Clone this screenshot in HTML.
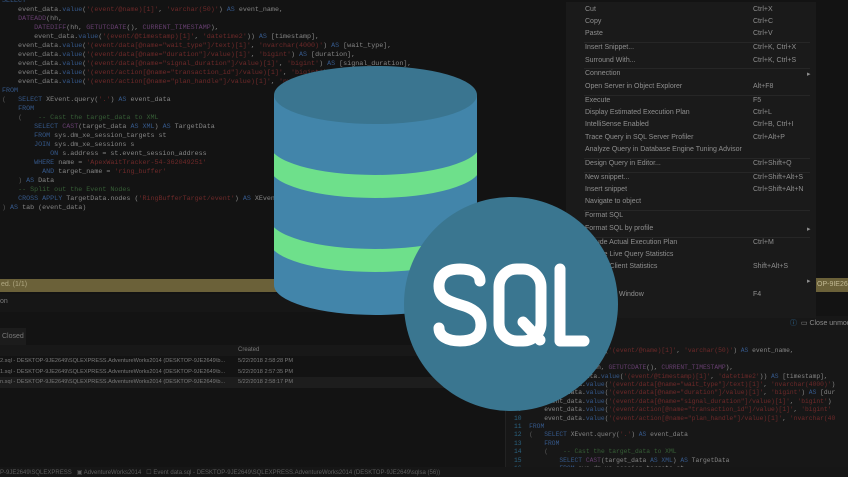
<!DOCTYPE html>
<html><head><meta charset="utf-8"><style>
*{margin:0;padding:0;box-sizing:border-box}
body{width:848px;height:477px;overflow:hidden;background:#131313;position:relative;font-family:"Liberation Sans",sans-serif}
.abs{position:absolute}
.code{position:absolute;font-family:"Liberation Mono",monospace;font-size:6.7px;line-height:9px;color:#858585;white-space:pre;overflow:hidden}
.k{color:#35588a}.s{color:#6e2929}.f{color:#653e6e}.c{color:#365e36}.g{color:#5a5a5a}
.menu{position:absolute;left:566px;top:2px;width:250px;height:316px;background:#1a1a1a;font-size:7px;color:#8e8e8e}
.mi{position:absolute;left:19px;white-space:nowrap}
.sc{position:absolute;left:187px;white-space:nowrap}
.sep{position:absolute;left:18px;right:6px;height:1px;background:#262626}
.ln{color:#2a6280}
.row{position:relative;height:10.7px;overflow:hidden}
.row b{font-weight:normal;position:absolute;left:0;width:234px;overflow:hidden}
.row i{font-style:normal;position:absolute;left:238px}
</style></head><body>
<div class="code" style="left:2px;top:-3px;width:560px;height:240px"><span class="k">SELECT</span>
    event_data.<span class="k">value</span>(<span class="s">'(event/@name)[1]'</span>, <span class="s">'varchar(50)'</span>) <span class="k">AS</span> event_name,
    <span class="f">DATEADD</span>(hh,
        <span class="f">DATEDIFF</span>(hh, <span class="f">GETUTCDATE</span>(), <span class="f">CURRENT_TIMESTAMP</span>),
        event_data.<span class="k">value</span>(<span class="s">'(event/@timestamp)[1]'</span>, <span class="s">'datetime2'</span>)) <span class="k">AS</span> [timestamp],
    event_data.<span class="k">value</span>(<span class="s">'(event/data[@name="wait_type"]/text)[1]'</span>, <span class="s">'nvarchar(4000)'</span>) <span class="k">AS</span> [wait_type],
    event_data.<span class="k">value</span>(<span class="s">'(event/data[@name="duration"]/value)[1]'</span>, <span class="s">'bigint'</span>) <span class="k">AS</span> [duration],
    event_data.<span class="k">value</span>(<span class="s">'(event/data[@name="signal_duration"]/value)[1]'</span>, <span class="s">'bigint'</span>) <span class="k">AS</span> [signal_duration],
    event_data.<span class="k">value</span>(<span class="s">'(event/action[@name="transaction_id"]/value)[1]'</span>, <span class="s">'bigint'</span>)
    event_data.<span class="k">value</span>(<span class="s">'(event/action[@name="plan_handle"]/value)[1]'</span>, <span class="s">'nvarchar'</span>)
<span class="k">FROM</span>
<span class="g">(</span>   <span class="k">SELECT</span> XEvent.query(<span class="s">'.'</span>) <span class="k">AS</span> event_data
    <span class="k">FROM</span>
    <span class="g">(</span>    <span class="c">-- Cast the target_data to XML</span>
        <span class="k">SELECT</span> <span class="f">CAST</span>(target_data <span class="k">AS</span> <span class="k">XML</span>) <span class="k">AS</span> TargetData
        <span class="k">FROM</span> sys.dm_xe_session_targets st
        <span class="k">JOIN</span> sys.dm_xe_sessions s
            <span class="k">ON</span> s.address = st.event_session_address
        <span class="k">WHERE</span> name = <span class="s">'ApexWaitTracker-54-362049251'</span>
          <span class="k">AND</span> target_name = <span class="s">'ring_buffer'</span>
    <span class="g">)</span> <span class="k">AS</span> Data
    <span class="c">-- Split out the Event Nodes</span>
    <span class="k">CROSS APPLY</span> TargetData.nodes (<span class="s">'RingBufferTarget/event'</span>) <span class="k">AS</span> XEventData
<span class="g">)</span> <span class="k">AS</span> tab (event_data)</div>

<div class="abs" style="left:0;top:279px;width:560px;height:13px;background:#6b6139;font-size:7px;color:#b0a882;padding:2px 0 0 1px">ed. (1/1)</div>
<div class="abs" style="left:816px;top:278px;width:32px;height:14px;background:#6b6139;font-size:7px;color:#c0b892;padding:3px 0 0 1px;overflow:hidden;white-space:nowrap">OP-9IE264</div>
<div class="abs" style="left:0;top:294px;width:500px;height:18px;background:#161616;font-size:7px;color:#7a7a7a;padding:4px 0 0 0">on</div>
<div class="abs" style="left:0;top:328px;width:26px;height:17px;background:#1c1c1c;font-size:7px;color:#7a7a7a;padding:5px 0 0 2px">Closed</div>
<div class="abs" style="left:0;top:345px;width:505px;height:11px;background:#181818;font-size:6px;color:#777;padding:2px 0 0 238px">Created</div>
<div class="abs" style="left:0;top:356px;width:505px;font-size:5.6px;line-height:10.7px;color:#7a7a7a;white-space:nowrap;overflow:hidden">
<div class="row"><b>2.sql - DESKTOP-9JE2649\SQLEXPRESS.AdventureWorks2014 (DESKTOP-9JE2649\b...</b><i>5/22/2018 2:58:28 PM</i></div>
<div class="row"><b>1.sql - DESKTOP-9JE2649\SQLEXPRESS.AdventureWorks2014 (DESKTOP-9JE2649\b...</b><i>5/22/2018 2:57:35 PM</i></div>
<div class="row" style="background:#1d1d1d"><b>n.sql - DESKTOP-9JE2649\SQLEXPRESS.AdventureWorks2014 (DESKTOP-9JE2649\b...</b><i>5/22/2018 2:58:17 PM</i></div>
</div>
<div class="abs" style="left:0;top:467px;width:848px;height:10px;background:#161616;font-size:6px;color:#5e5e5e;white-space:nowrap;padding-top:2px;overflow:hidden">P-9JE2649\SQLEXPRESS &nbsp; ▣ AdventureWorks2014 &nbsp; ☐ Event data.sql - DESKTOP-9JE2649\SQLEXPRESS.AdventureWorks2014 (DESKTOP-9JE2649\sqlsa (56))</div>

<div class="abs" style="left:505px;top:316px;width:343px;height:151px;background:#171717;border-left:1px solid #222"></div>
<div class="abs" style="left:790px;top:318px;font-size:7px;color:#8a8a8a;white-space:nowrap;overflow:hidden;width:58px"><span style="color:#2f6f9f">ⓘ</span> &nbsp;▭ Close unmod</div>
<div class="code" style="left:514px;top:339px;font-size:6.3px;line-height:8.4px;width:334px;height:128px"><span class="ln"> 1</span>  <span class="k">SELECT</span>
<span class="ln"> 2</span>  &nbsp;   event_data.<span class="k">value</span>(<span class="s">'(event/@name)[1]'</span>, <span class="s">'varchar(50)'</span>) <span class="k">AS</span> event_name,
<span class="ln"> 3</span>      <span class="f">DATEADD</span>(hh,
<span class="ln"> 4</span>          <span class="f">DATEDIFF</span>(hh, <span class="f">GETUTCDATE</span>(), <span class="f">CURRENT_TIMESTAMP</span>),
<span class="ln"> 5</span>          event_data.<span class="k">value</span>(<span class="s">'(event/@timestamp)[1]'</span>, <span class="s">'datetime2'</span>)) <span class="k">AS</span> [timestamp],
<span class="ln"> 6</span>      event_data.<span class="k">value</span>(<span class="s">'(event/data[@name="wait_type"]/text)[1]'</span>, <span class="s">'nvarchar(4000)'</span>)
<span class="ln"> 7</span>      event_data.<span class="k">value</span>(<span class="s">'(event/data[@name="duration"]/value)[1]'</span>, <span class="s">'bigint'</span>) <span class="k">AS</span> [dur
<span class="ln"> 8</span>      event_data.<span class="k">value</span>(<span class="s">'(event/data[@name="signal_duration"]/value)[1]'</span>, <span class="s">'bigint'</span>)
<span class="ln"> 9</span>      event_data.<span class="k">value</span>(<span class="s">'(event/action[@name="transaction_id"]/value)[1]'</span>, <span class="s">'bigint'</span>
<span class="ln">10</span>      event_data.<span class="k">value</span>(<span class="s">'(event/action[@name="plan_handle"]/value)[1]'</span>, <span class="s">'nvarchar(40</span>
<span class="ln">11</span>  <span class="k">FROM</span>
<span class="ln">12</span>  <span class="g">(</span>   <span class="k">SELECT</span> XEvent.query(<span class="s">'.'</span>) <span class="k">AS</span> event_data
<span class="ln">13</span>      <span class="k">FROM</span>
<span class="ln">14</span>      <span class="g">(</span>    <span class="c">-- Cast the target_data to XML</span>
<span class="ln">15</span>          <span class="k">SELECT</span> <span class="f">CAST</span>(target_data <span class="k">AS</span> <span class="k">XML</span>) <span class="k">AS</span> TargetData
<span class="ln">16</span>          <span class="k">FROM</span> sys.dm_xe_session_targets st</div>

<div class="menu">
<div class="mi" style="top:4px">Cut</div><div class="sc" style="top:4px">Ctrl+X</div>
<div class="mi" style="top:16px">Copy</div><div class="sc" style="top:16px">Ctrl+C</div>
<div class="mi" style="top:28px">Paste</div><div class="sc" style="top:28px">Ctrl+V</div>
<div class="sep" style="top:40px"></div>
<div class="mi" style="top:42px">Insert Snippet...</div><div class="sc" style="top:42px">Ctrl+K, Ctrl+X</div>
<div class="mi" style="top:55px">Surround With...</div><div class="sc" style="top:55px">Ctrl+K, Ctrl+S</div>
<div class="sep" style="top:66px"></div>
<div class="mi" style="top:68px">Connection</div><div class="sc" style="top:68px;left:241px">▸</div>
<div class="mi" style="top:81px">Open Server in Object Explorer</div><div class="sc" style="top:81px">Alt+F8</div>
<div class="sep" style="top:93px"></div>
<div class="mi" style="top:95px">Execute</div><div class="sc" style="top:95px">F5</div>
<div class="mi" style="top:107px">Display Estimated Execution Plan</div><div class="sc" style="top:107px">Ctrl+L</div>
<div class="mi" style="top:119px">IntelliSense Enabled</div><div class="sc" style="top:119px">Ctrl+B, Ctrl+I</div>
<div class="mi" style="top:132px">Trace Query in SQL Server Profiler</div><div class="sc" style="top:132px">Ctrl+Alt+P</div>
<div class="mi" style="top:144px">Analyze Query in Database Engine Tuning Advisor</div>
<div class="sep" style="top:156px"></div>
<div class="mi" style="top:158px">Design Query in Editor...</div><div class="sc" style="top:158px">Ctrl+Shift+Q</div>
<div class="sep" style="top:170px"></div>
<div class="mi" style="top:172px">New snippet...</div><div class="sc" style="top:172px">Ctrl+Shift+Alt+S</div>
<div class="mi" style="top:184px">Insert snippet</div><div class="sc" style="top:184px">Ctrl+Shift+Alt+N</div>
<div class="mi" style="top:196px">Navigate to object</div>
<div class="sep" style="top:208px"></div>
<div class="mi" style="top:210px">Format SQL</div>
<div class="mi" style="top:223px">Format SQL by profile</div><div class="sc" style="top:223px;left:241px">▸</div>
<div class="sep" style="top:235px"></div>
<div class="mi" style="top:237px">Include Actual Execution Plan</div><div class="sc" style="top:237px">Ctrl+M</div>
<div class="mi" style="top:249px">Include Live Query Statistics</div>
<div class="mi" style="top:261px">Include Client Statistics</div><div class="sc" style="top:261px">Shift+Alt+S</div>
<div class="sc" style="top:275px;left:241px">▸</div>
<div class="mi" style="top:289px">Properties Window</div><div class="sc" style="top:289px">F4</div>
<div class="mi" style="top:303px">Options...</div>
</div>

<svg class="abs" style="left:0;top:0" width="848" height="477" viewBox="0 0 848 477">
<defs><clipPath id="cyl"><path d="M274,95 L477,95 L477,285 A101.5,30 0 0 1 274,285 Z"/></clipPath></defs>
<path d="M274,95 L477,95 L477,285 A101.5,30 0 0 1 274,285 Z" fill="#4285aa"/>
<g clip-path="url(#cyl)" fill="#6ee08b">
<path d="M270,145 A105,30 0 0 0 480,145 L480,168 A105,30 0 0 1 270,168 Z"/>
<path d="M270,219 A105,30 0 0 0 480,219 L480,242 A105,30 0 0 1 270,242 Z"/>
</g>
<ellipse cx="375.5" cy="95" rx="101.5" ry="29" fill="#3a7590"/>
<circle cx="511" cy="304" r="107" fill="#3a7690"/>
<g fill="none" stroke="#fff" stroke-width="11" stroke-linecap="round" stroke-linejoin="round">
<path d="M480,281 C480,273 472,269 460,269 C447,269 439,275 439,286 C439,299 451,302 461,305 C472,308 481,313 481,325 C481,337 472,341 460,341 C447,341 439,336 439,328"/>
<rect x="499" y="269" width="42" height="72" rx="18"/>
<path d="M523,322 L540,340"/>
<path d="M560,269 L560,341 L584,341"/>
</g>
</svg>
</body></html>
